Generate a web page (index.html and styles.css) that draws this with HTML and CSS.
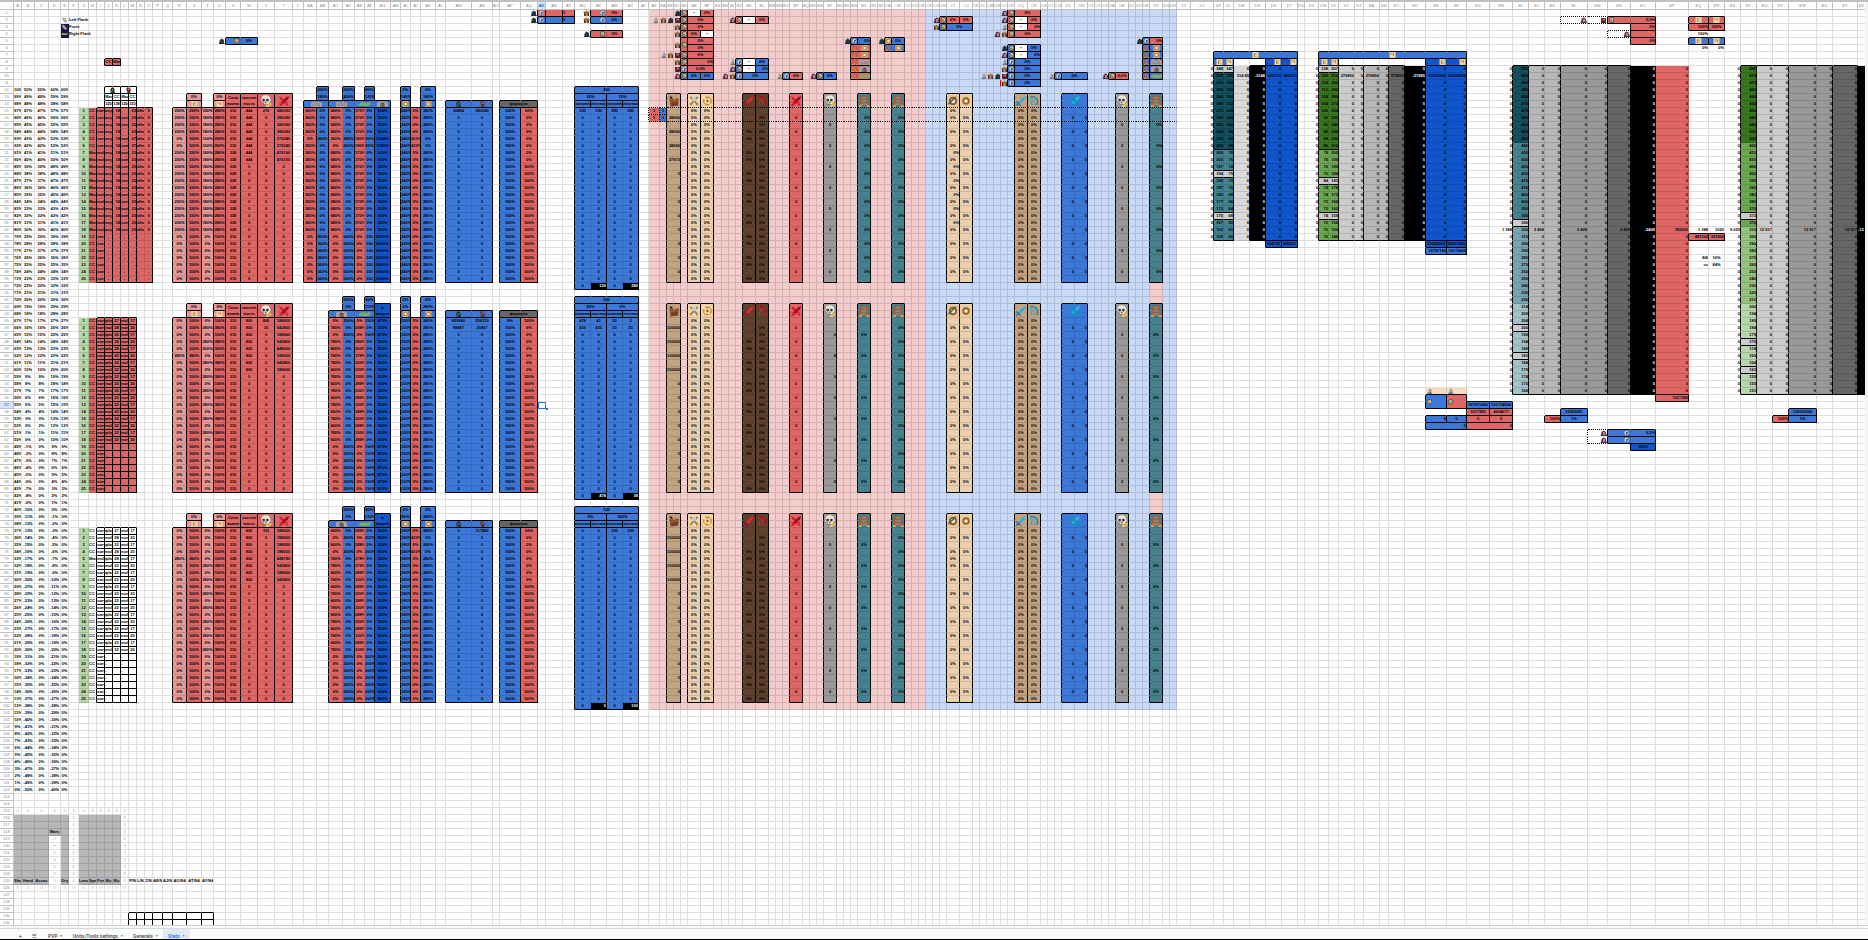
FILE: index.html
```html
<!DOCTYPE html>
<html lang="ru">
<head>
<meta charset="utf-8">
<title>Stats</title>
<link rel="stylesheet" href="styles.css">
</head>
<body>
<svg class="sprite" aria-hidden="true">
  <symbol id="hood" viewBox="0 0 14 12"><path d="M3 12V5l4-4 5 3v5l2 3z" fill="#1d3a48"/><path d="M6 5h4v4H6z" fill="#3f2a33"/><path d="M2 12l2-4 3 4z" fill="#101820"/><path d="M8 2l3 1v2z" fill="#3b7088"/></symbol>
  <symbol id="hut" viewBox="0 0 14 12"><path d="M1 4l6-3 6 3v2H1z" fill="#8a6a3c"/><path d="M2 6h10v6H2z" fill="#4a3024"/><path d="M5 6h4v6H5z" fill="#c98f68"/><path d="M3 3h8v1H3z" fill="#d8b978"/></symbol>
  <symbol id="lady" viewBox="0 0 14 12"><path d="M3 12V4l4-3 4 2 3 9z" fill="#6d2444"/><path d="M6 4h4v6H6z" fill="#b58d8c"/><path d="M1 12l3-6 2 6z" fill="#43324f"/><path d="M10 4l3 6-1 2-2-3z" fill="#2c4a63"/></symbol>
  <symbol id="king" viewBox="0 0 14 12"><path d="M2 2h10v10H2z" fill="#4c1c26"/><path d="M5 3h5v4H5z" fill="#b9745f"/><path d="M2 7h4v5H2zM9 8h3v4H9z" fill="#8f2330"/><path d="M5 8h4v4H5z" fill="#25222e"/></symbol>
  <symbol id="monk" viewBox="0 0 14 12"><path d="M2 12l4-9 3-2 2 3 2 8z" fill="#9fb7ba"/><path d="M6 2h4v4H6z" fill="#c08878"/><path d="M4 9h6v3H4z" fill="#4e7c89"/><path d="M9 6l3 6H9z" fill="#b0604e"/></symbol>
  <symbol id="coin" viewBox="0 0 14 12"><circle cx="7" cy="6" r="5.5" fill="#4c4a45"/><circle cx="7" cy="6" r="4" fill="#d9c9a0"/><path d="M5 4l5 4-2 2-4-3z" fill="#8a765a"/></symbol>
  <symbol id="orb" viewBox="0 0 14 12"><circle cx="7" cy="6" r="5.5" fill="#6d88a8"/><circle cx="7" cy="6" r="4" fill="#cfd8e2"/><path d="M6 4h4v3H8v3H6z" fill="#3f5e80"/></symbol>
  <symbol id="card" viewBox="0 0 14 12"><path d="M1 0h12v12H1z" fill="#f1d6a4"/><path d="M4 3h5v2H6v4h4v1H4z" fill="#b0843d"/></symbol>
  <symbol id="flag" viewBox="0 0 14 12"><path d="M1 0h12v12H1z" fill="#f1d6a4"/><path d="M3 3h7v5H8V5H3z" fill="#c0883a"/></symbol>
  <symbol id="wall" viewBox="0 0 26 12"><path d="M2 3h3V1h5v2h5V1h4v2h5v9H2z" fill="#b5aaa9"/><path d="M3 6h20M3 9h20M8 3v9M14 3v9M19 3v9" stroke="#7d7476" stroke-width="1"/></symbol>
  <symbol id="gate" viewBox="0 0 26 12"><path d="M2 3h3V1h16v2h3v9H2z" fill="#a9a3a3"/><path d="M9 5l4-2 4 2v7H9z" fill="#5b4437"/><path d="M11 6v6M14 6v6" stroke="#b59c7e"/></symbol>
  <symbol id="moat" viewBox="0 0 26 12"><path d="M1 8C5 1 12 2 15 4s6-3 10-1c0 5-4 8-9 7S6 12 1 8z" fill="#8fae52"/><path d="M3 8c5-5 8-3 12-1s5-3 8-2c-2 4-7 3-10 2S7 9 3 8z" fill="#48b0a5"/></symbol>
  <symbol id="elf" viewBox="0 0 14 12"><path d="M3 12V4l4-4 4 4v8z" fill="#19251d"/><path d="M6 4h3v3H6z" fill="#a77050"/><path d="M4 7h3v5H4z" fill="#3c6b43"/></symbol>
  <symbol id="orc" viewBox="0 0 14 12"><path d="M3 1h6l3 4-2 7H5L3 6z" fill="#6d2928"/><path d="M6 3h4v3H6z" fill="#c06b55"/><path d="M4 6h3v4H4z" fill="#2e5443"/></symbol>
  <symbol id="ring" viewBox="0 0 14 12"><path d="M1 0h12v12H1z" fill="#d9ae74"/><circle cx="7" cy="6" r="3.6" fill="#fff0c4" stroke="#8d5c22" stroke-width="1.6"/></symbol>
  <symbol id="skull" viewBox="0 0 26 26"><path d="M3 4l5-4h9l5 4 2 8-4 5v4H8v-4l-6-4z" fill="#ece6d8" stroke="#6b6459"/><circle cx="8" cy="11" r="3" fill="#34302e"/><circle cx="16" cy="11" r="3" fill="#34302e"/><path d="M12 14l2 3h-3zM9 19v3M12 19v3M15 19v3" stroke="#554e48" fill="#34302e"/><circle cx="21" cy="20" r="4" fill="#e1b550"/><path d="M13 22h6v4h-6z" fill="#f1d27c"/></symbol>
  <symbol id="clash" viewBox="0 0 26 26"><path d="M2 2l6 3 15 16-3 3L5 9z" fill="#d51f2c"/><path d="M24 2l-2 7L8 22l-5 2 1-5L17 5z" fill="#a80f20"/><path d="M3 14l8 9M15 21l7-7" stroke="#e43a42" stroke-width="3"/></symbol>
  <symbol id="sword" viewBox="0 0 26 26"><path d="M23 3l-2 6L10 20l-4-4L17 5z" fill="#ed2330"/><path d="M3 14l9 9M7 19l-4 4" stroke="#a0101c" stroke-width="3"/></symbol>
  <symbol id="bow" viewBox="0 0 26 26"><path d="M5 3c9-1 19 5 15 19" stroke="#a3131c" stroke-width="4" fill="none"/><path d="M5 3l15 19M20 5L7 17l1 4" stroke="#cc2832" stroke-width="2" fill="none"/></symbol>
  <symbol id="bsword" viewBox="0 0 26 26"><path d="M23 3l-2 6L10 20l-4-4L17 5z" fill="#25b1ee"/><path d="M3 14l9 9M7 19l-4 4" stroke="#16739f" stroke-width="3"/></symbol>
  <symbol id="bbow" viewBox="0 0 26 26"><path d="M5 3c9-1 19 5 15 19" stroke="#287e9e" stroke-width="3" fill="none"/><path d="M5 3l15 19M20 4L6 18l1 4M5 4l3 16h12" stroke="#3aa3c8" stroke-width="2" fill="none"/></symbol>
  <symbol id="bclash" viewBox="0 0 26 26"><path d="M24 1l-3 8L9 21l-5-4L16 5z" fill="#27b8dc"/><path d="M3 4l4 1 17 19-4-1zM2 14l10 10M16 21l8-8" stroke="#1590be" stroke-width="3"/></symbol>
  <symbol id="bag" viewBox="0 0 26 26"><path d="M3 8l6 3 14-4-1 16-16 2z" fill="#7c3f1e"/><path d="M4 2l5 2 2 7-7-4z" fill="#3d2c25"/><path d="M10 7l5-5 4 6-6 3z" fill="#cd9050"/><path d="M4 13l19-3v3L5 17z" fill="#a35b2d"/></symbol>
  <symbol id="blades" viewBox="0 0 26 26"><path d="M1 1h24v24H1z" fill="#f6d9a0"/><path d="M5 4l16 17M21 4L5 21" stroke="#87846f" stroke-width="4"/><path d="M4 19l4 4M18 23l4-5" stroke="#c98d34" stroke-width="3"/><circle cx="13" cy="9" r="5" fill="#c8c8b8"/></symbol>
  <symbol id="aim" viewBox="0 0 26 26"><path d="M1 1h24v24H1z" fill="#f7d391"/><circle cx="14" cy="13" r="8" fill="none" stroke="#c98832" stroke-width="3"/><path d="M5 4l14 16M8 17l11-9" stroke="#fff2cf" stroke-width="3"/><circle cx="14" cy="13" r="3" fill="#9a6a30"/></symbol>
  <symbol id="shield" viewBox="0 0 26 26"><path d="M1 1h24v24H1z" fill="#ebc48b"/><circle cx="13" cy="13" r="9" fill="#8a5d2c"/><circle cx="13" cy="13" r="5" fill="#dfe3df"/><path d="M3 20L19 4" stroke="#4a5b66" stroke-width="3"/></symbol>
  <symbol id="target" viewBox="0 0 26 26"><path d="M2 2h22v22H2z" fill="#f0cb8e"/><circle cx="13" cy="13" r="8" fill="#8e6430"/><circle cx="13" cy="13" r="4" fill="#f5ecd0"/></symbol>
  <symbol id="ladder" viewBox="0 0 26 26"><path d="M8 1L4 25M18 1l4 24" stroke="#b4532a" stroke-width="4"/><path d="M8 6h10M7 13h12M6 20h14" stroke="#cf7441" stroke-width="3"/><path d="M2 22h6v4H2zM19 22h6v4h-6z" fill="#e2b154"/></symbol>
  <symbol id="claw" viewBox="0 0 14 12"><path d="M2 1l4 2 6 6-2 3-5-3-3-5z" fill="#b3a99d"/><path d="M5 2l4 1 2 5" stroke="#6f665f" fill="none"/></symbol>
</svg>
<main class="sheet"><table class="grid" id="grid"></table></main>
<div class="hscroll"></div>
<nav class="tabs" aria-label="Листы">
  <button class="tool" type="button" aria-label="Добавить лист">+</button>
  <button class="tool" type="button" aria-label="Все листы">☰</button>
  <button class="tab" type="button">PVP <span>▼</span></button>
  <button class="tab" type="button">Units/Tools settings <span>▼</span></button>
  <button class="tab" type="button">Generals <span>▼</span></button>
  <button class="tab active" type="button">Stats <span>▼</span></button>
</nav>
<script src="sheet.js"></script>
</body>
</html>
```
FILE: styles.css
```css
* { box-sizing: border-box; }
body {
  margin: 0;
  height: 100vh;
  display: flex;
  flex-direction: column;
  background: #fff;
  border-top: 2px solid #c0c0c0;
  border-bottom: 1px solid #000;
  font-family: "Liberation Sans", Arial, sans-serif;
  color: #000;
}
.sprite { display: none; }
.sheet {
  flex: 1;
  min-height: 0;
  overflow: auto;
  scrollbar-width: none;
  border-right: 3px solid #f1f3f4;
}
.grid {
  table-layout: fixed;
  border-collapse: separate;
  border-spacing: 0;
  font-size: 4px;
  line-height: 6px;
}
.grid td, .grid th {
  height: 7px;
  padding: 0;
  border: 0 solid rgba(0, 0, 0, .13);
  border-width: 0 1px 1px 0;
  overflow: hidden;
  white-space: nowrap;
  text-align: center;
  vertical-align: middle;
  font-weight: bold;
  color: #000;
}
.grid th { background: #fff; color: #888; border-color: #c0c0c0; font-weight: normal; }
.grid thead th { height: 8px; }
.grid th.on { background: #d3e3fd; color: #0b3a8c; }
.grid .r { text-align: right; }
.grid .l { text-align: left; }
.grid .over { overflow: visible; text-align: left; }
.grid .faint { color: #ccc; }

.grid .br-k { border-right-color: #000; }
.grid .bb-k { border-bottom-color: #000; }
.grid .br-d { border-right: 1px dotted #000; }
.grid .bb-d { border-bottom: 1px dotted #000; }
.grid .br-e { border-right-color: #e00000; }
.grid .picked {
  position: relative;
  overflow: visible;
  outline: 1px solid #1a73e8;
  outline-offset: -1px;
}
.picked::after {
  content: "";
  position: absolute;
  right: -3px;
  bottom: -2px;
  width: 2px;
  height: 2px;
  background: #1a73e8;
}

.icon { width: 7px; height: 6px; display: inline-block; vertical-align: top; }
.icon.wide { width: 13px; }
.icon.big { width: 12px; height: 12px; }

.white { background: #fff; }
.red { background: #e06666; }
.rose { background: #ea9999; }
.pink { background: #f4cccc; }
.sky { background: #c9daf8; }
.blue { background: #3c78d8; }
.navy { background: #1155cc; }
.tan { background: #c2a27f; }
.cream { background: #ebd0b0; }
.peach { background: #f9dcc0; }
.brown { background: #5f422d; }
.plum { background: #20124d; }
.g1 { background: #d9d9d9; }
.g2 { background: #cccccc; }
.g3 { background: #b7b7b7; }
.g4 { background: #999999; }
.g5 { background: #666666; }
.grid .black { background: #000; color: #fff; }
.t1 { background: #134f5c; }
.t2 { background: #45818e; }
.t3 { background: #76a5af; }
.t4 { background: #a2c4c9; }
.f1 { background: #38761d; }
.f2 { background: #6aa84f; }
.f3 { background: #93c47d; }
.f4 { background: #b6d7a8; }

.hscroll { height: 4px; border-top: 1px solid #d0d0d0; border-bottom: 1px solid #d8d8d8; background: #f8f9fa; }
.tabs {
  height: 10px;
  display: flex;
  align-items: stretch;
  padding-left: 14px;
  background: #f9fbfd;
}
.tabs button {
  border: 0;
  padding: 4px 0 0;
  background: none;
  font: 500 5px/6px Roboto, "Liberation Sans", sans-serif;
  color: #444;
}
.tabs .tool { width: 13px; }
.tabs .tab { padding: 4px 5px 0; white-space: nowrap; }
.tabs .tool + .tab { margin-left: 3px; }
.tabs span { font-size: 3px; margin-left: 1px; vertical-align: top; }
.tabs .active { background: #e1e9f7; color: #1967d2; }
```
FILE: sheet.js
```js
const cols = ("A8 B13 C14 D12 E8 F10 G10 H8 I8 J8 K8 L8 M8 N8 O8 P10 Q10 R14 S15 T12 U12 V15 W17 X17 Y18 Z11 " +
  "AA13 AB12 AC14 AD12 AE10 AF10 AG16 AH10 AI10 AJ10 AK15 AL10 AM26 AN21 AO7 AP21 AQ17 AR8 AS17 AT12 AU16 AV16 AW16 AX16 AY10 AZ11 " +
  "BA7 BB7 BC7 BD7 BE13 BF13 BG8 BH7 BI7 BJ7 BK13 BL13 BM7 BN7 BO7 BP13 BQ7 BR7 BS7 BT13 BU7 BV7 BW7 BX13 BY7 BZ7 " +
  "CA7 CB13 CC7 CD7 CE7 CF7 CG7 CH7 CI13 CJ13 CK7 CL7 CM7 CN7 CO7 CP7 CQ13 CR13 CS7 CT7 CU7 CV13 CW13 CX7 CY7 CZ7 " +
  "DA7 DB13 DC7 DD7 DE7 DF13 DG7 DH7 DI14 DJ23 DK10 DL10 DM16 DR16 DS16 DT16 DU7 DV14 DW10 DX10 DY16 DZ9 " +
  "EA16 EB9 EC16 ED21 EE21 EF20 EG23 EH23 EI16 EJ16 EK16 EL27 EM20 EN23 EO25 EP33 EQ20 ER16 ES16 ET16 EU16 EV16 EW28 EX16 EY25 EZ8")
  .split(" ").map(s => { const m = s.match(/([A-Z]+)(\d+)/); return { name: m[1], width: +m[2] }; });
const ROWS = 131;
const index = Object.fromEntries(cols.map((c, i) => [c.name, i]));
const cells = {};
const at = (r, c) => cells[r + "," + c] || (cells[r + "," + c] = { cls: "", bg: "", text: "" });

function range(ref) {
  const p = ref.split(":").map(s => s.match(/([A-Z]+)(\d+)/));
  const q = p[1] || p[0];
  return { c1: index[p[0][1]], r1: +p[0][2], c2: index[q[1]], r2: +q[2] };
}
const pick = (t, i) => typeof t === "function" ? t(i) : Array.isArray(t) ? (i < t.length ? t[i] : t[t.length - 1]) : t;
function put(ref, bg, text, cls) {
  const g = range(ref);
  for (let r = g.r1; r <= g.r2; r++) for (let c = g.c1; c <= g.c2; c++) {
    const x = at(r, c);
    if (bg) x.bg = bg;
    if (text !== undefined) x.text = pick(text, r - g.r1);
    if (cls) x.cls = cls;
  }
}
function merge(ref, bg, text, cls) {
  const g = range(ref);
  put(ref, bg, "", cls);
  const x = at(g.r1, g.c1);
  x.text = text;
  x.span = g;
  for (let r = g.r1; r <= g.r2; r++) for (let c = g.c1; c <= g.c2; c++)
    if (r !== g.r1 || c !== g.c1) at(r, c).hidden = true;
}
function box(ref, kind = "k") {
  const g = range(ref);
  for (let r = g.r1; r <= g.r2; r++) {
    if (g.c1 > 0) at(r, g.c1 - 1).br = kind;
    at(r, g.c2).br = kind;
  }
  for (let c = g.c1; c <= g.c2; c++) {
    if (g.r1 > 1) at(g.r1 - 1, c).bb = kind;
    at(g.r2, c).bb = kind;
  }
}
function mesh(ref) {
  const g = range(ref);
  for (let r = g.r1; r <= g.r2; r++) for (let c = g.c1; c <= g.c2; c++) box(cols[c].name + r);
}
function columns(names, r1, r2) { names.split(" ").forEach(n => box(`${n}${r1}:${n}${r2}`)); }
const icon = (id, size = "") => `<svg class="icon ${size}"><use href="#${id}"/></svg>`;
const big = id => icon(id, "big");

/* Percent ladder on the left */
for (let r = 12; r <= 112; r++) {
  const k = r - 12;
  put("A" + r, "", 100 - k + "%");
  put("B" + r, "", 50 - k + "%");
  put("C" + r, "", Math.max(0, 50 - k) + "%");
  put("D" + r, "", 60 - k + "%");
  put("E" + r, "", Math.max(0, 60 - k) + "%");
}
put("E2", "", icon("claw"));
put("E3", "plum", icon("claw"));
put("E4", "plum", icon("moat"));
put("F2", "", "Left Flank", "over");
put("F3", "", "Front", "over");
put("F4", "", "Right Flank", "over");
put("U5", "", icon("hood"), "r");
put("V5", "blue", icon("coin"), "r");
put("W5", "blue", "0%");
box("V5:W5");
put("J8", "red", "СС"); put("K8", "red", "Мы"); mesh("J8:K8");
merge("J12:K12", "", icon("elf")); merge("L12:M12", "", icon("orc"));
["Мы", "СС", "Мы", "СС"].forEach((t, i) => put("JKLM"[i] + 13, "", t));
["320", "138", "120", "310"].forEach((t, i) => put("JKLM"[i] + 14, "", t));
mesh("J12:M14");

/* Three attack/defence blocks */
const rep = (t, n) => Array(n).fill(t);
const tail = (head, mid, end) => i => i < head.length ? head[i] : i < 18 ? (Array.isArray(mid) ? mid[i % 2] : mid) : end;
const blocks = [
  { r: 15, R: tail([...rep("230%", 4), "0%", "0%"], "230%", "0%"), S: tail([...rep("330%", 4), "100%", "100%"], "330%", "100%"),
    T: tail([...rep("180%", 4), "100%", "100%"], "180%", "0%"), U: tail([...rep("280%", 4), "200%", "200%"], "280%", "100%"),
    V: tail(rep("310", 6), "328", "310"), W: [...rep("444", 8), "0"], X: ["276", "0"],
    Y: [...rep("386392", 4), "276240", "276240", "476190", "476190", "0"],
    AA: tail([...rep("360%", 4), "0%"], "360%", "0%"), AB: tail([...rep("0%", 4), "360%"], "0%", "360%"),
    AC: tail([...rep("680%", 4), "360%", "0%"], "680%", "0%"), AD: tail([...rep("0%", 4), "240%", "600%"], "0%", "600%"),
    AE: tail([...rep("370%", 4), "180%", "180%"], "370%", "0%"), AF: tail([...rep("0%", 4), "80%", "80%"], "0%", "200"),
    AG: tail([...rep("100%", 4), "2044%", "1080%"], "100%", "9660%"), AI: "240%",
    AJ: [...rep("0%", 4), "410%", "410%", "0%"], AK: [...rep("280%", 4), "0%", "0%", "280%"],
    AM: ["36864", "0"], AN: ["243040", "0"], AP: "100%", AQ: ["60%", ...rep("0%", 7), "100%"],
    AU: ["120", "0"], AV: ["120", "0"], AW: ["280", "0"], AX: ["280", "0"],
    top: ["400", "30%", "70%"], sums: ["120", "280"], caps: { AB: ["200%", "180%"], AD: ["200%", "400%"], AF: ["80%", "120%"], AI: ["0%", "140%"], AK: ["0%", "180%"] } },
  { r: 45, R: [...rep("0%", 5), "280%", "0%"], S: [...rep("100%", 5), "380%", "100%"],
    T: tail(["0%", "280%", "0%", "280%", "200%", "0%", "280%", "0%"], ["280%", "0%"], "0%"),
    U: tail(["100%", "380%", "100%", "380%", "300%", "100%", "380%", "100%"], ["380%", "100%"], "100%"),
    V: "310", W: [...rep("800", 8), "0"], X: ["800", "30", "0"],
    Y: ["188000", "942800", "188000", "942800", "448000", "188000", "942800", "188000", "0"],
    AC: tail(["0%", "780%", "0%", "780%", "800%", "780%", "780%", "660%"], ["780%", "660%"], "0%"),
    AD: tail(["200%", "0%", "200%"], "0%", "200%"),
    AE: tail(["0%", "288%", "0%", "280%", "200%", "378%", "330%", "330%"], ["330%", "288%"], "0%"),
    AF: tail(["190%", "0%", "190%"], "0%", "190%"), AG: tail(["870%", "100%", "870%"], "100%", "870%"),
    AI: "100%", AJ: "0%", AK: "280%", AM: ["829960", "88687", "0"], AN: ["256210", "26867", "0"],
    AP: ["9%", "100%"], AQ: ["100%", "6%", ...rep("0%", 6), "100%"],
    AU: ["478", "433", "0"], AV: ["42", "433", "0"], AW: ["20", "23", "0"], AX: ["2", "23", "0"],
    top: ["500", "90%", "0%"], sums: ["478", "38"], caps: { AD: ["200%", "0%"], AF: ["80%", "110%"], AI: ["0%", "0%"], AK: ["0%", "280%"] } },
  { r: 75, R: [...rep("0%", 4), "280%", "0%"], S: [...rep("100%", 4), "380%", "100%"],
    T: tail([...rep("0%", 5), "280%", "0%", "280%"], ["0%", "280%"], "0%"),
    U: tail([...rep("100%", 5), "380%", "100%", "380%"], ["100%", "380%"], "100%"),
    V: [...rep("310", 4), "328", "310"], W: [...rep("800", 8), "0"], X: ["331", "0"],
    Y: [...rep("188000", 4), "848780", "942800", "188000", "942800", "0"],
    AC: tail(["660%", "0%", "660%", "0%", "780%", "780%"], ["660%", "780%"], "0%"),
    AD: tail(["0%", "200%", "0%", "200%"], "0%", "200%"),
    AE: tail(["288%", "0%", "288%", "0%", "378%", "378%"], ["288%", "330%"], "0%"),
    AF: tail(["0%", "200%", "0%", "200%"], "0%", "200%"), AG: tail(["100%", "900%", "100%", "900%"], "100%", "900%"),
    AI: "180%", AJ: ["0%", "410%", "0%", "410%", "0%"], AK: ["280%", "0%", "280%", "0%", "280%"],
    AM: "0", AN: ["117800", "0"], AP: "100%", AQ: ["66%", ...rep("0%", 7), "100%"],
    AU: "0", AV: "0", AW: ["100", "0"], AX: ["100", "0"],
    top: ["100", "0%", "100%"], sums: ["0", "100"], caps: { AD: ["200%", "0%"], AF: ["80%", "120%"], AI: ["0%", "80%"], AK: ["0%", "280%"] } }
];
const paint = { R: "rose", S: "red", T: "rose", U: "red", V: "red", W: "red", X: "red", Y: "red",
  AA: "red", AB: "blue", AC: "red", AD: "blue", AE: "red", AF: "blue", AG: "navy", AI: "blue", AJ: "red", AK: "blue",
  AM: "blue", AN: "blue", AP: "blue", AQ: "red", AU: "blue", AV: "blue", AW: "blue", AX: "blue" };

blocks.forEach((b, n) => {
  const s = b.r, e = s + 24, h = s - 1, first = n === 0;
  put(`G${s}:G${e}`, "f4", i => i + 1);
  if (n < 2) put(`H${s}:${first ? "O" : "M"}${e}`, "red");
  put(`H${s}:H${e}`, "", i => (first ? i > 5 && i < 18 : n === 2 && i === 4) ? "Мы" : "СС", "l");
  put(`I${s}:I${e}`, "", i => (first ? i > 5 && i < 18 : n === 2 && i === 4) ? "mold" : "swrp", "l");
  const unit = ["фlang", "mold", "noni"];
  if (first) {
    put(`J${s}:J${e}`, "", tail([], "any", "-"));
    put(`K${s}:K${e}`, "", tail([], "18", "-"), "r");
    put(`L${s}:L${e}`, "", tail(["", "over", "over", "", "vom", "vom"], "over", "-"));
    put(`M${s}:M${e}`, "", tail([...rep("23", 4), "27", "27"], "23", "-"), "r");
    put(`N${s}:N${e}`, "", tail([], "alha", "-"), "l");
    put(`O${s}:O${e}`, "", tail([...rep("9", 4), "2", "2"], "9", "-"));
    box(`I${s}:O${e}`);
    columns("J K M", s, e);
  } else {
    put(`J${s}:J${e}`, "", i => i < 18 ? unit[i % 2] : "-", "l");
    put(`K${s}:K${e}`, "", tail(["27", "28", "22", "28", "28"], "22", ""));
    put(`L${s}:L${e}`, "", i => i < 18 ? unit[1 + i % 2] : "-", "l");
    put(`M${s}:M${e}`, "", tail([], ["17", "20"], ""));
    mesh(`I${s}:M${e}`);
  }
  for (const k in paint) if (b[k] !== undefined) put(`${k}${s}:${k}${e}`, paint[k], b[k]);
  columns("R S T U", s, e);
  put(`S${h - 1}`, "rose", "0%"); put(`S${h}`, "rose", icon("card"));
  put(`U${h - 1}`, "rose", "0%"); put(`U${h}`, "rose", icon("flag"));
  mesh(`S${h - 1}:S${h}`); mesh(`U${h - 1}:U${h}`);
  merge(`V${h - 1}:V${h}`, "red", "Сила<br>воина"); merge(`W${h - 1}:W${h}`, "red", "числен<br>ность");
  merge(`X${h - 1}:X${h}`, "red", big("skull")); merge(`Y${h - 1}:Y${h}`, "red", big("clash"));
  columns("V W X Y", h - 1, h); columns("V W X Y", s, e);

  for (const k in b.caps) { put(`${k}${h - 2}:${k}${h - 1}`, "blue", b.caps[k]); box(`${k}${h - 2}:${k}${h - 1}`); }
  if (first) {
    merge(`AA${h}:AB${h}`, "blue", icon("wall", "wide"));
    merge(`AC${h}:AD${h}`, "blue", icon("wall", "wide"));
    put(`AG${h}`, "blue", icon("gate", "wide"));
    box(`AA${h}:AB${h}`); columns("AA AB", s, e);
  } else {
    merge(`AC${h}:AD${h}`, "blue", icon("gate", "wide"));
    merge(`AG${h - 1}:AG${h}`, "navy", "в<br>защите");
    box(`AG${h - 1}:AG${h}`);
  }
  merge(`AE${h}:AF${h}`, "blue", icon("moat", "wide"));
  box(`AC${h}:AG${h}`); box(`AC${s}:AD${e}`); box(`AE${s}:AF${e}`); box(`AG${s}:AG${e}`);
  put(`AI${h}`, "blue", icon("ring")); put(`AK${h}`, "blue", icon("ring"));
  box(`AI${h}`); box(`AK${h}`); columns("AI AJ AK", s, e);
  put(`AM${h}`, "blue", icon("elf")); put(`AN${h}`, "blue", icon("orc"));
  box(`AM${h}:AN${h}`); box(`AM${s}:AN${e}`);
  merge(`AP${h}:AQ${h}`, "g5", "формула"); box(`AP${h}:AQ${h}`); columns("AP AQ", s, e);
  merge(`AU${h - 2}:AX${h - 2}`, "blue", b.top[0]);
  merge(`AU${h - 1}:AV${h - 1}`, "blue", b.top[1]); merge(`AW${h - 1}:AX${h - 1}`, "blue", b.top[2]);
  ["AU", "AV", "AW", "AX"].forEach((c, i) => put(c + h, "blue", i % 2 ? "лестниц" : "основное"));
  box(`AU${h - 2}:AX${h - 2}`); box(`AU${h - 1}:AV${h - 1}`); box(`AW${h - 1}:AX${h - 1}`); mesh(`AU${h}:AX${h}`);
  box(`AU${s}:AV${e + 1}`); box(`AW${s}:AX${e + 1}`);
  put(`AU${e + 1}`, "blue", "0"); put(`AW${e + 1}`, "blue", "0");
  put(`AV${e + 1}`, "black", b.sums[0], "r"); put(`AX${e + 1}`, "black", b.sums[1], "r");
});

/* Small badges above the blocks */
function badge(row, people, iconCol, id, bg, parts) {
  people.forEach(([c, who]) => put(c + row, "", icon(who), "r"));
  put(iconCol + row, bg, icon(id));
  box(iconCol + row);
  parts.forEach(([ref, color, text, cls]) => {
    const r = ref.split(":").map(c => c + row).join(":");
    if (ref.includes(":")) merge(r, color, text, cls); else put(r, color, text, cls);
    box(r);
  });
}
put("AZ1:CE100", "pink"); put("CF1:DH100", "sky");
put("DF40:DF42", "pink"); put("DF70:DF72", "pink");

badge(1, [["AQ", "hood"]], "AR", "orb", "red", [["AS", "red", ""], ["AT", "red", "0", "l"]]);
badge(2, [["AQ", "hood"]], "AR", "orb", "blue", [["AS", "blue", ""], ["AT", "blue", "0", "l"]]);
[[1, "hut", "red", "orb"], [2, "hut", "blue", "orb"], [4, "hood", "red", "coin"]].forEach(([r, who, bg, id]) => {
  put("AU" + r, "", icon(who), "r"); put("AV" + r, bg, icon(id), "r"); put("AW" + r, bg, "0%"); box(`AV${r}:AW${r}`);
});
const M = "BE:BF", Q = "CQ:CR";
badge(1, [["BC", "hood"]], "BD", "coin", "red", [["BE", "white", "•"], ["BF", "red", "0%"]]);
badge(2, [["AZ", "monk"], ["BA", "hut"], ["BB", "hood"], ["BC", "king"]], "BD", "coin", "red", [[M, "red", "0%"]]);
badge(3, [["BC", "hut"]], "BD", "coin", "red", [[M, "red", "0%"]]);
badge(4, [["BC", "hut"]], "BD", "coin", "red", [["BE", "red", "0%"], ["BF", "white", "•"]]);
badge(5, [], "BD", "coin", "red", [[M, "red", "0%"]]);
badge(6, [], "BD", "coin", "red", [[M, "red", "0%"]]);
merge("BC5:BC6", "pink", icon("hut")); merge("BD5:BD6", "red", icon("coin"));
badge(7, [["BA", "monk"], ["BB", "hut"], ["BC", "king"]], "BD", "coin", "red", [[M, "red", "0%"]]);
badge(8, [["BC", "hut"]], "BD", "coin", "red", [[M, "red", "0%", "r"]]);
badge(9, [["BC", "king"]], "BD", "orb", "red", [[M, "red", "0,0%"]]);
badge(10, [["BC", "lady"]], "BD", "coin", "blue", [["BE", "blue", "0%"], ["BF", "blue", "0%"]]);
badge(2, [["BI", "lady"]], "BJ", "coin", "red", [["BK", "white", "•"], ["BL", "red", "0%"]]);
badge(8, [["BI", "monk"]], "BJ", "orb", "blue", [["BK", "white", "•"], ["BL", "blue", "0%"]]);
badge(9, [["BI", "lady"]], "BJ", "coin", "blue", [["BK", "white", "•"], ["BL", "blue", "0%", "r"]]);
badge(10, [["BH", "lady"], ["BI", "hut"]], "BJ", "orb", "blue", [["BK:BL", "blue", "0%"]]);
badge(10, [["BN", "monk"]], "BO", "orb", "blue", [["BP", "red", "0%"]]);
badge(10, [["BR", "lady"]], "BS", "coin", "blue", [["BT", "blue", "0%"]]);
badge(5, [["BV", "hood"]], "BW", "orb", "blue", [["BX", "blue", "0%", "r"]]);
["ring", "ring", "wall", "gate", "moat"].forEach((id, i) => {
  const size = i > 1 ? "wide" : "";
  put("BW" + (6 + i), "red", icon("ladder")); put("BX" + (6 + i), "red", icon(id, size)); box(`BW${6 + i}:BX${6 + i}`);
  put("DE" + (6 + i), "blue", icon("ladder")); put("DF" + (6 + i), "blue", icon(id, size)); mesh(`DE${6 + i}:DF${6 + i}`);
});
badge(5, [["BZ", "hood"]], "CA", "ring", "blue", [["CB", "blue", "0%"]]);
put("CA6", "blue", icon("ladder")); put("CB6", "blue", icon("ring")); box("CA5:CB6");
badge(2, [["CG", "lady"]], "CH", "coin", "red", [["CI", "red", "0%"], ["CJ", "red", "0%"]]);
badge(3, [["CG", "hut"]], "CH", "coin", "blue", [["CI:CJ", "blue", "0%"]]);
badge(1, [["CO", "lady"]], "CP", "coin", "red", [[Q, "red", "0%"]]);
badge(2, [["CO", "lady"]], "CP", "coin", "red", [["CQ", "white", "•"], ["CR", "red", "0%"]]);
badge(3, [["CO", "monk"]], "CP", "coin", "red", [["CQ", "white", "•"], ["CR", "red", "0%", "r"]]);
badge(4, [["CN", "lady"], ["CO", "hut"]], "CP", "coin", "red", [[Q, "red", "0%"]]);
badge(6, [["CO", "hood"]], "CP", "coin", "blue", [["CQ", "white", "•"], ["CR", "blue", "0%"]]);
badge(7, [["CO", "lady"]], "CP", "coin", "blue", [["CQ", "white", "•"], ["CR", "blue", "0%", "r"]]);
badge(8, [["CO", "monk"]], "CP", "orb", "blue", [[Q, "blue", "0%"]]);
badge(9, [["CO", "hut"]], "CP", "orb", "blue", [[Q, "blue", "0%"]]);
badge(10, [["CL", "monk"], ["CM", "hut"], ["CN", "hood"], ["CO", "king"]], "CP", "orb", "blue", [[Q, "blue", "0%"]]);
badge(11, [["CO", "hut"]], "CP", "orb", "blue", [[Q, "blue", "0%"]]);
at(11, index.CN).br = "e";
badge(10, [["CT", "monk"]], "CU", "orb", "blue", [["CV:CW", "blue", "0%"]]);
badge(10, [["CZ", "lady"]], "DA", "coin", "red", [["DB", "red", "0,0%"]]);
badge(5, [["DD", "hood"]], "DE", "orb", "blue", [["DF", "red", "0%", "r"]]);

/* Tool columns inside the pink and light-blue areas */
put("AZ15:AZ16", "red", "1"); put("BA15:BA16", "blue", "1");
["AZ15", "AZ16", "BA15", "BA16"].forEach(c => box(c, "d"));
const odd = v => i => i % 2 ? v : "";
const third = v => i => i % 3 === 2 ? v : "";
[15, 45, 75].forEach((s, n) => {
  const e = s + 24, a = s - 2, h = s - 1;
  const col = (c, bg, id, text, cls) => {
    merge(`${c}${a}:${c}${h}`, bg, big(id));
    put(`${c}${s}:${c}${e}`, bg, text, cls);
    box(`${c}${a}:${c}${e}`);
  };
  merge(`BB${a}:BC${h}`, "tan", big("bag"));
  for (let r = s; r <= e; r++) {
    const i = r - s;
    merge(`BB${r}:BC${r}`, "tan", i % 2 ? (i < 8 ? (n ? "100000" : i === 7 ? "27972" : "28690") : "0") : "", "r");
  }
  box(`BB${a}:BC${e}`);
  col("BE", "cream", "blades", "0%"); col("BF", "cream", "aim", "0%");
  col("BK", "brown", "sword", i => i > 2 && i % 3 !== 2 ? "0%" : "");
  col("BL", "brown", "bow", i => i ? "0%" : "");
  col("BP", "red", "clash", odd("0"));
  col("BT", "g4", "skull", third("0"), n === 1 ? "r" : "");
  col("BX", "t2", "ladder", n ? third("0%") : odd("0%"), n ? "" : "r");
  col("CB", "t2", "ladder", odd("0%"), "r");
  col("CI", "cream", "shield", i => i % 2 || (n === 0 && (i === 0 || (i > 5 && i < 17))) || (n === 2 && i === 4) ? "0%" : "");
  col("CJ", "cream", "target", odd("0%"));
  col("CQ", "tan", "bsword", "0%"); col("CR", "tan", "bbow", "0%");
  merge(`CV${a}:CW${h}`, "blue", big("bclash"));
  put(`CV${s}:CW${e}`, "blue", odd("0"), "r");
  box(`CV${a}:CW${e}`);
  col("DB", "g4", "skull", third("0"));
  col("DF", "t2", "ladder", third("0%"), n ? "" : "r");
});
[6, 8, 10, 12, 14, 16].forEach(i => { at(15 + i, index.CI).cls = "r"; });
for (const c of cols.slice(index.AZ, index.DH + 1)) { at(14, index[c.name]).bb = "d"; at(16, index[c.name]).bb = "d"; }

/* Damage ladders on the right */
const shade = (ref, values, bands) => {
  const g = range(ref), name = cols[g.c1].name;
  values.forEach((v, i) => {
    const r = 9 + i, grey = bands.grey.includes(r);
    put(name + r, grey ? "g2" : bands.steps.filter(b => r >= b[0]).pop()[1], v, "r");
    if (grey) { at(r, g.c1).bb = "k"; at(r - 1, g.c1).bb = "k"; }
  });
};
const num = s => s.split(" ");
let bands = { grey: [9, 24, 30], steps: [[9, "t1"], [21, "t2"]] };
shade("DK9", num("348 320 310 300 290 280 270 260 250 240 230 220 209 202 197 194 192 187 182 177 172 170 167 163 159"), bands);
shade("DL9", num("147 128 124 120 116 112 108 104 100 96 92 88 78 76 74 79 72 70 68 66 64 68 62 61 60"), bands);
bands = { grey: [9, 25, 30], steps: [[9, "f1"], [21, "f2"]] };
shade("DW9", num("138 120 116 112 108 104 100 96 92 88 84 80 78 78 76 76 84 74 74 72 72 74 70 70 70"), bands);
shade("DX9", num("207 310 300 290 280 270 260 250 240 230 220 210 200 196 190 184 183 178 172 166 160 159 156 150 146"), bands);
const zeros = (c, bg, special, end = 33) => put(`${c}9:${c}${end}`, bg, i => special && special[i + 9] || "0", "r");
zeros("DJ", ""); zeros("DV", "");
zeros("DM", "g1", { 10: "314 85" }); zeros("DR", "black", { 10: "-3148" });
zeros("DS", "navy", { 10: "164732" }); zeros("DT", "navy", { 10: "409011" });
zeros("DY", "g2", { 10: "276850" }); zeros("DZ", "g2"); zeros("EA", "g3", { 10: "276850" }); zeros("EB", "g3");
zeros("EC", "g5", { 10: "276850" }); zeros("ED", "black", { 10: "-27685" });
zeros("EE", "navy", { 10: "33222000" }); zeros("EF", "navy", { 10: "83823800" });
box("DK9:DL33"); at(20, index.DK).bb = at(20, index.DL).bb = "k";
box("DW9:DX33"); at(20, index.DW).bb = at(20, index.DX).bb = "k";
columns("DR", 9, 33); box("DS9:DT33"); box("DY9:DZ33"); box("EA9:EB33"); box("EC9:EC33"); box("EE9:EF33");
merge("DK7:DT7", "blue", icon("card")); box("DK7:DT7");
merge("DW7:EF7", "blue", icon("flag")); box("DW7:EF7");
[["DK", "DL", "DS", "DT"], ["DW", "DX", "EE", "EF"]].forEach(g => {
  put(g[0] + 8, "blue", icon("card"), "r"); put(g[1] + 8, "blue", icon("flag"), "r"); box(`${g[0]}8:${g[1]}8`);
  put(g[2] + 8, "navy", icon("card"), "r"); put(g[3] + 8, "navy", icon("flag"), "r"); box(`${g[2]}8:${g[3]}8`);
});
put("DS34", "navy", "164732"); put("DT34", "navy", "409011"); mesh("DS34:DT34");
put("EE34", "navy", "33222000"); put("EF34", "navy", "83823800");
put("EE35", "blue", "19797186", "r"); put("EF35", "blue", "10172468", "r"); mesh("EE34:EF35");

shade("EI9", num("500 490 490 480 480 470 470 460 460 450 450 440 430 430 420 420 410 410 400 400 390 390 390 320 310 300 290 280 270 260 250 240 230 220 214 209 204 200 199 194 189 183 184 179 174 170 166"),
  { grey: [31, 46, 50], steps: [[9, "t1"], [20, "t2"], [32, "t3"], [43, "t4"]] });
shade("ET9", num("480 470 470 460 460 450 450 440 440 430 430 420 410 410 400 400 390 390 380 380 370 372 370 310 300 290 280 270 260 250 240 230 220 210 200 194 189 184 179 175 174 169 164 162 159 155 151"),
  { grey: [30, 48, 52], steps: [[9, "f1"], [20, "f2"], [32, "f3"], [43, "f4"]] });
[["EH", "", "1 388"], ["EJ", "g3", "2 408"], ["EK", "g3"], ["EL", "g4", "2 408"], ["EM", "g4"], ["EN", "g5", "2 408"],
 ["EO", "black", "-2408"], ["EP", "red", "782600"], ["ES", "", "9 029"], ["EU", "g2", "12 917"], ["EV", "g2"],
 ["EW", "g4", "12 917"], ["EX", "g4"], ["EY", "g5", "12 917"]].forEach(([c, bg, v]) => zeros(c, bg, v && { 32: v }, 55));
put("EZ9:EZ55", "black", i => i === 23 ? "-12" : "", "l");
["EI9:EI55", "EJ9:EK55", "EL9:EM55", "EN9:EN55", "ET9:ET55", "EU9:EV55", "EW9:EX55", "EY9:EY55"].forEach(r => box(r));
put("EQ32", "", "1 388", "r"); put("ER32", "", "1020", "r");
put("EQ33", "red", "481100", "r"); put("ER33", "red", "331800", "r"); mesh("EQ33:ER33");
put("EQ36:EQ37", "", ["ББ", "сс"], "r"); put("ER36:ER37", "", ["16%", "84%"]);
put("EP56", "red", "1017380", "r"); box("EP56");

put("EL2", "", icon("lady"), "r"); put("EM2", "", icon("king"), "r"); box("EL2:EM2", "d");
put("EN2", "red", icon("coin"), "l"); put("EO2", "red", "0,0%", "r"); box("EN2:EO2");
put("EO3:EO5", "red", ["0%", "", "0%"], "r"); mesh("EO3:EO5");
put("EN4", "", icon("lady"), "r"); box("EN4", "d"); at(4, index.EN).br = "k";
put("EQ2:ER3", "red"); put("EQ2", "", icon("card")); put("ER2", "", icon("flag"));
put("EQ3", "", "100%", "r"); put("ER3", "", "100%"); mesh("EQ2:ER2"); box("EQ3"); box("ER3");
put("EQ4", "", "100%", "r");
put("EQ5", "blue", icon("card")); put("ER5", "blue", icon("flag")); mesh("EQ5:ER5");
put("EQ6:ER6", "", "0%", "r");

put("EE55:EF55", "peach", icon("monk"), "l");
merge("EE56:EE57", "blue", icon("coin"), "l"); merge("EF56:EF57", "red", icon("coin"), "l");
box("EE56:EE57"); box("EF56:EF57");
put("EG57", "blue", "197971860"); put("EH57", "blue", "101724684");
put("EG58", "red", "1017380"); put("EH58", "red", "4004077");
put("EE59", "blue", "0", "r"); put("EF59", "blue", "0"); put("EG59:EH59", "red", "0");
mesh("EG57:EH59"); mesh("EE59:EF59");
merge("EE60:EF60", "blue", "0", "r"); merge("EG60:EH60", "red", "0", "r"); box("EE60:EF60"); box("EG60:EH60");
put("EL58", "blue", "32365981"); put("EK59", "red", "100%", "r"); put("EL59", "blue", "1%"); box("EL58"); mesh("EK59:EL59");
put("EW58", "blue", "126916940"); put("EV59", "red", "100%", "r"); put("EW59", "blue", "1%"); box("EW58"); mesh("EV59:EW59");
put("EM61:EM62", "", icon("lady"), "r"); box("EM61:EM62", "d");
put("EN61:EN62", "blue", icon("orb"), "r"); put("EO61:EO62", "blue", ["0,5%", ""], "r");
box("EN61:EO61"); box("EN62:EO62");
put("EO63", "navy", "100%"); box("EO63");

/* Service area at the bottom */
put("A115:L115", "", "0", "faint"); put("A126:L126", "", "0", "faint");
put("F116:F125", "", "0", "faint"); put("L116:L125", "", "0", "faint");
put("A116:E125", "g3"); put("G116:K125", "g3");
put("D119:D125", "white", "0", "faint");
put("D118", "g3", "Wars");
[["A", "Sho"], ["B", "Hand"], ["C", "Assas"], ["E", "Orig"], ["G", "Lans"], ["H", "Spe"], ["I", "Fire"], ["J", "Mo"], ["K", "Mu"]]
  .forEach(([c, t]) => put(c + 125, "g3", t));
["P/N", "L/N", "Z/N", "AE/N", "AJ/N", "AO/N4", "AT/N4", "AY/N4"].forEach((t, i) => put("MNOPQRST"[i] + 125, "", t));
mesh("M130:T131");

put("AR57", "", "", "picked");

/* Render */
let html = "<colgroup><col style='width:14px'>" + cols.map(c => `<col style="width:${c.width}px">`).join("") + "</colgroup>";
html += "<thead><tr><th></th>" + cols.map(c => `<th scope="col"${c.name === "AR" ? ' class="on"' : ""}>${c.name}</th>`).join("") + "</tr></thead><tbody>";
for (let r = 1; r <= ROWS; r++) {
  html += `<tr><th scope="row"${r === 57 ? ' class="on"' : ""}>${r}</th>`;
  for (let c = 0; c < cols.length; c++) {
    const x = cells[r + "," + c];
    if (!x) { html += "<td></td>"; continue; }
    if (x.hidden) continue;
    const edge = x.span ? at(x.span.r2, x.span.c2) : x;
    const cls = [x.bg, x.cls, edge.br && "br-" + edge.br, edge.bb && "bb-" + edge.bb].filter(Boolean).join(" ");
    const span = x.span ? ` colspan="${x.span.c2 - c + 1}" rowspan="${x.span.r2 - r + 1}"` : "";
    html += `<td${cls ? ` class="${cls}"` : ""}${span}>${x.text}</td>`;
  }
  html += "</tr>";
}
const grid = document.getElementById("grid");
grid.style.width = 14 + cols.reduce((s, c) => s + c.width, 0) + "px";
grid.innerHTML = html + "</tbody>";
```
